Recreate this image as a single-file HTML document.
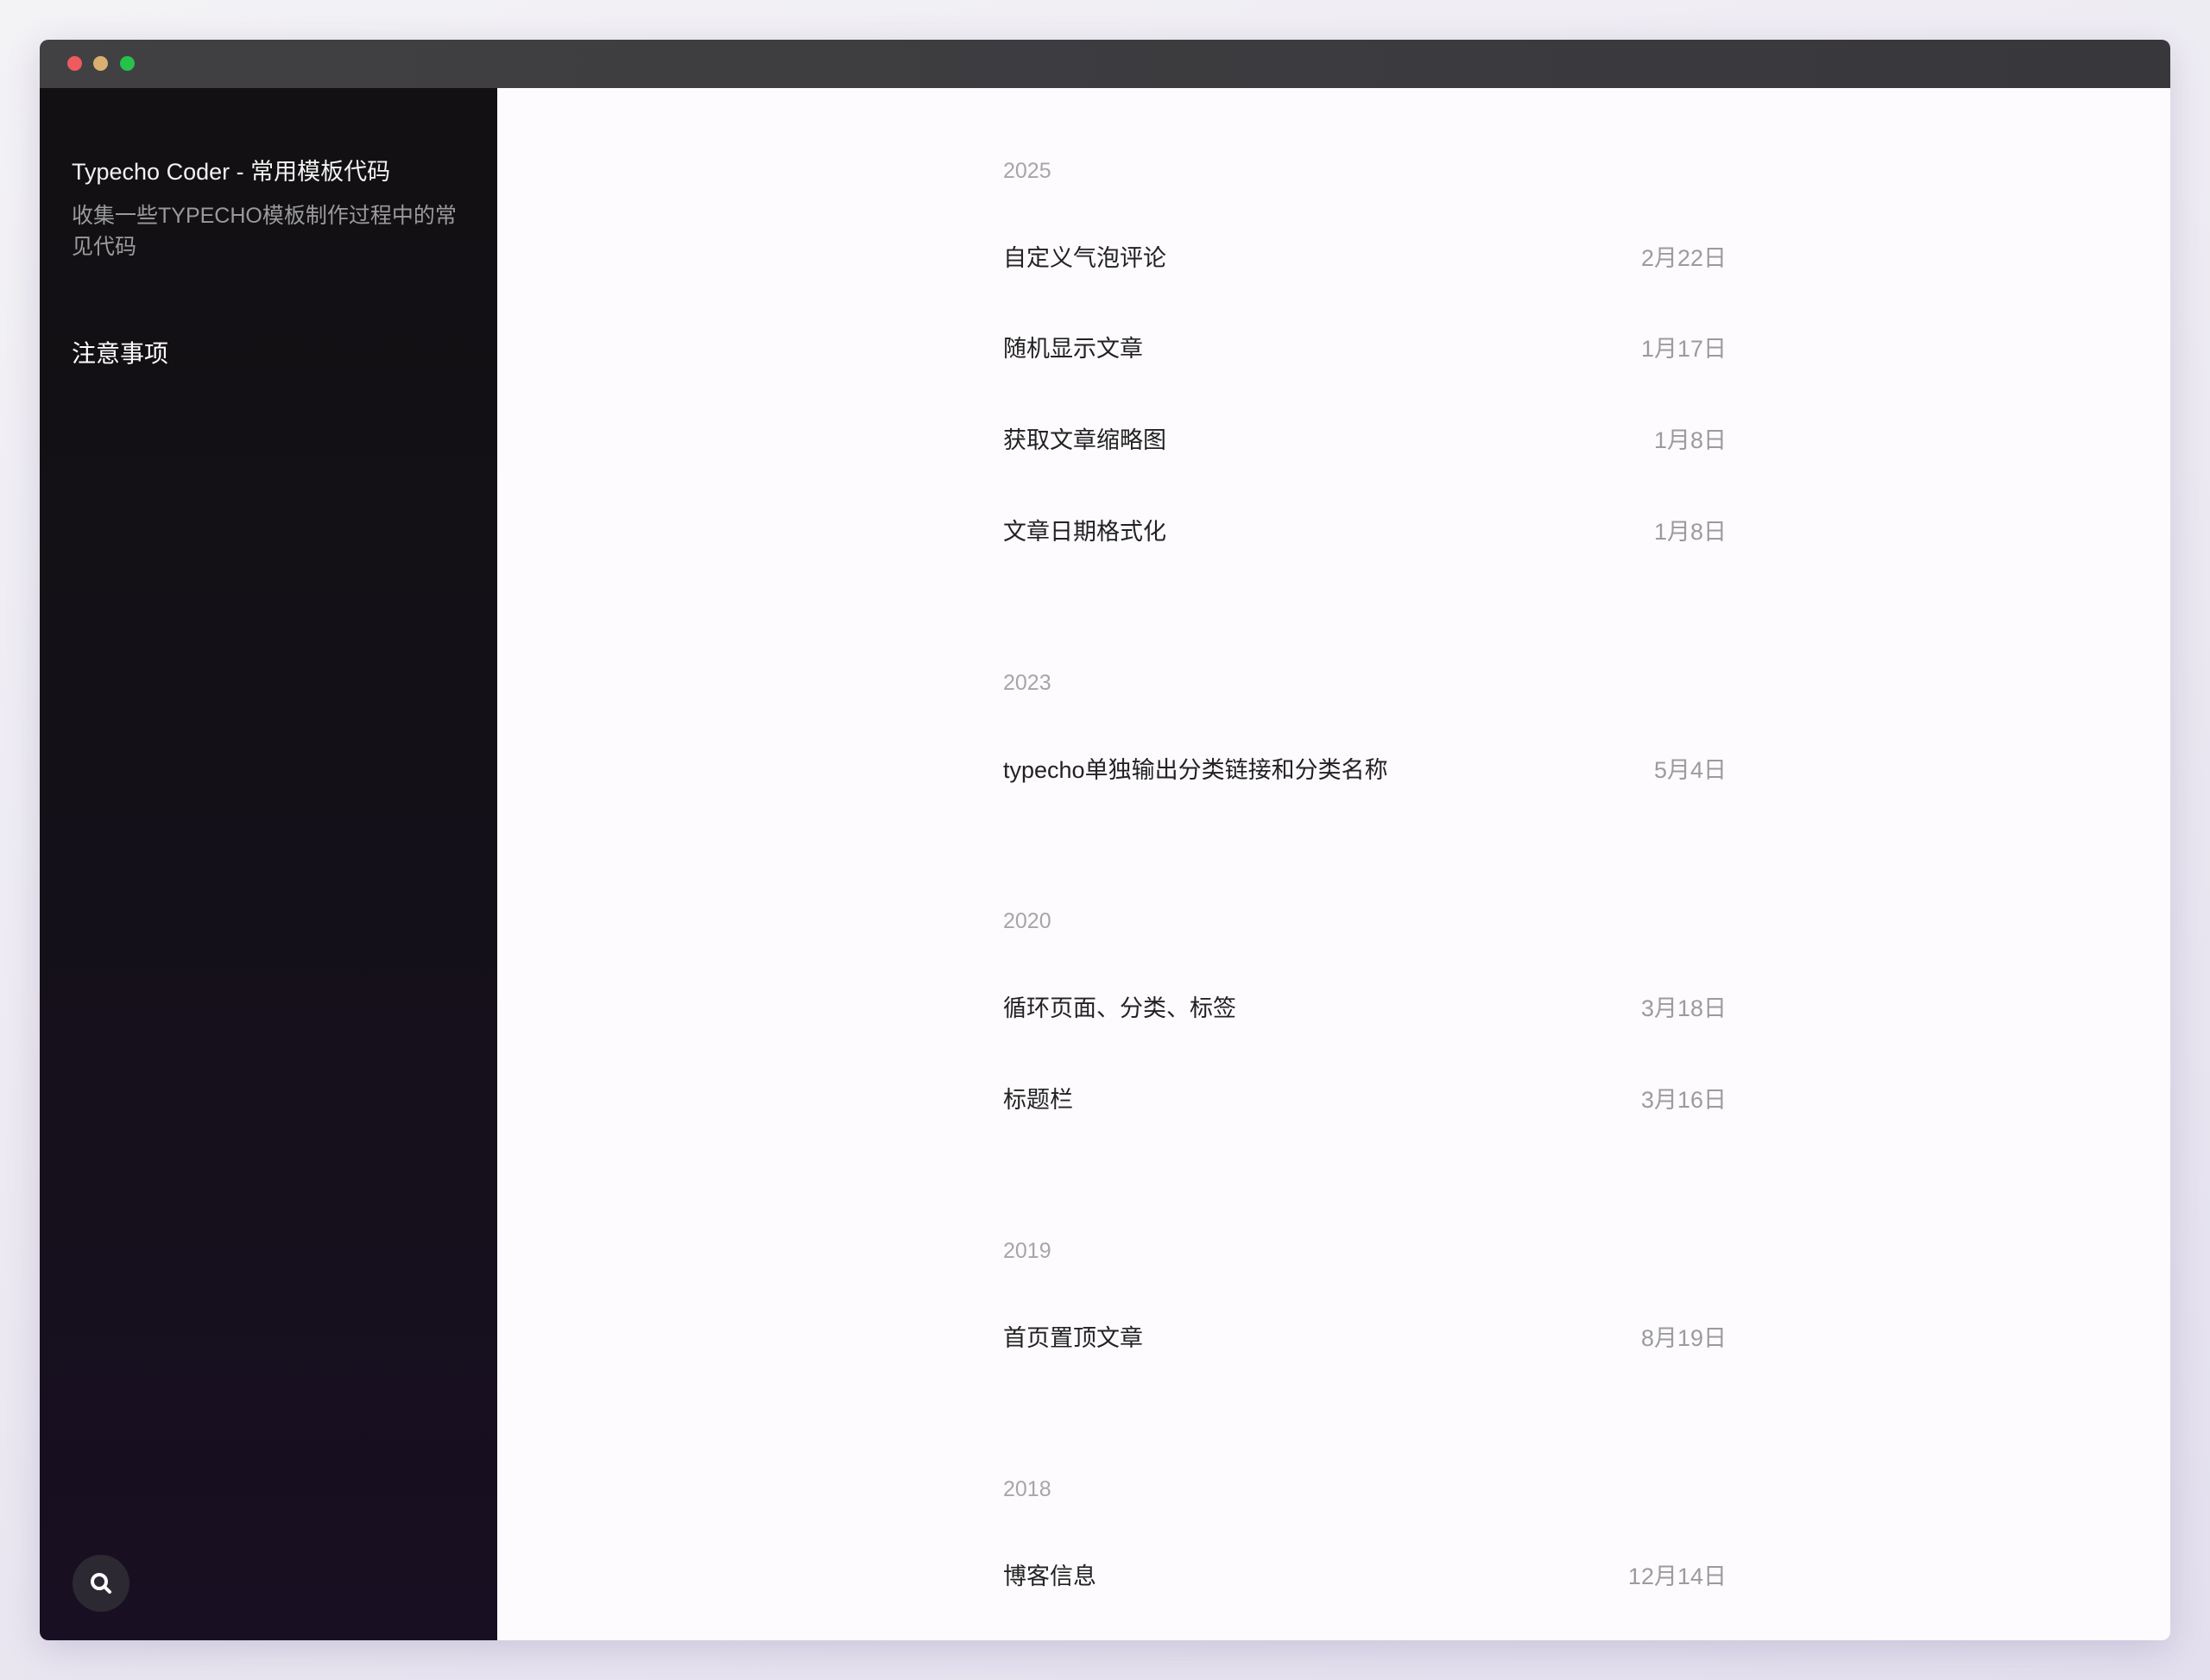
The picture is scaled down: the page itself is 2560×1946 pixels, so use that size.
<!DOCTYPE html>
<html><head><meta charset="utf-8"><style>
*{margin:0;padding:0;box-sizing:border-box}
body{width:2560px;height:1946px;overflow:hidden;background:linear-gradient(160deg,#f3f2f5 0%,#ece9f2 50%,#e3dfee 100%);font-family:"Liberation Sans","Noto Sans CJK SC",sans-serif;position:relative}
.win{position:absolute;left:46px;top:46px;width:2468px;height:1854px;border-radius:10px;overflow:hidden;box-shadow:0 10px 40px rgba(80,60,120,.18)}
.bar{height:56px;background:linear-gradient(90deg,#414143,#38373c);position:relative}
.dot{position:absolute;top:19px;width:17px;height:17px;border-radius:50%}
.side{position:absolute;left:0;top:56px;width:530px;bottom:0;background:linear-gradient(180deg,#121012 0%,#141019 50%,#180f22 100%)}
.main{position:absolute;left:530px;top:56px;right:0;bottom:0;background:#fdfbfe}
.t{position:absolute;left:37px;top:75px;color:#f2f2f2;font-size:27px}
.s{position:absolute;left:37px;top:130px;width:450px;color:#9a9a9a;font-size:25px;line-height:36px}
.n{position:absolute;left:37px;top:286px;color:#fff;font-size:28px}
.srch{position:absolute;left:38px;top:1699px;width:66px;height:66px;border-radius:50%;background:#2d2933}
.y{position:absolute;left:586px;color:#a6a6a6;font-size:25px}
.r{position:absolute;left:586px;width:838px;font-size:27px;color:#222;display:flex;justify-content:space-between}
.r span{color:#9b9b9b;font-size:27px}
</style></head><body>
<div class="win">
<div class="bar"><div class="dot" style="left:32px;background:#ef5a5e"></div><div class="dot" style="left:62px;background:#d9b070"></div><div class="dot" style="left:93px;background:#27c24a"></div></div>
<div class="side">
<div class="t">Typecho Coder - 常用模板代码</div>
<div class="s">收集一些TYPECHO模板制作过程中的常见代码</div>
<div class="n">注意事项</div>
<div class="srch"><svg width="66" height="66" viewBox="0 0 66 66"><circle cx="31" cy="31" r="8" fill="none" stroke="#fff" stroke-width="4"/><line x1="37" y1="37" x2="43" y2="43" stroke="#fff" stroke-width="4" stroke-linecap="round"/></svg></div>
</div>
<div class="main">
<div class="y" style="top:82px">2025</div>
<div class="r" style="top:175px">自定义气泡评论<span>2月22日</span></div>
<div class="r" style="top:280px">随机显示文章<span>1月17日</span></div>
<div class="r" style="top:386px">获取文章缩略图<span>1月8日</span></div>
<div class="r" style="top:492px">文章日期格式化<span>1月8日</span></div>
<div class="y" style="top:675px">2023</div>
<div class="r" style="top:768px">typecho单独输出分类链接和分类名称<span>5月4日</span></div>
<div class="y" style="top:951px">2020</div>
<div class="r" style="top:1044px">循环页面、分类、标签<span>3月18日</span></div>
<div class="r" style="top:1150px">标题栏<span>3月16日</span></div>
<div class="y" style="top:1333px">2019</div>
<div class="r" style="top:1426px">首页置顶文章<span>8月19日</span></div>
<div class="y" style="top:1609px">2018</div>
<div class="r" style="top:1702px">博客信息<span>12月14日</span></div>
</div>
</div>
</body></html>
